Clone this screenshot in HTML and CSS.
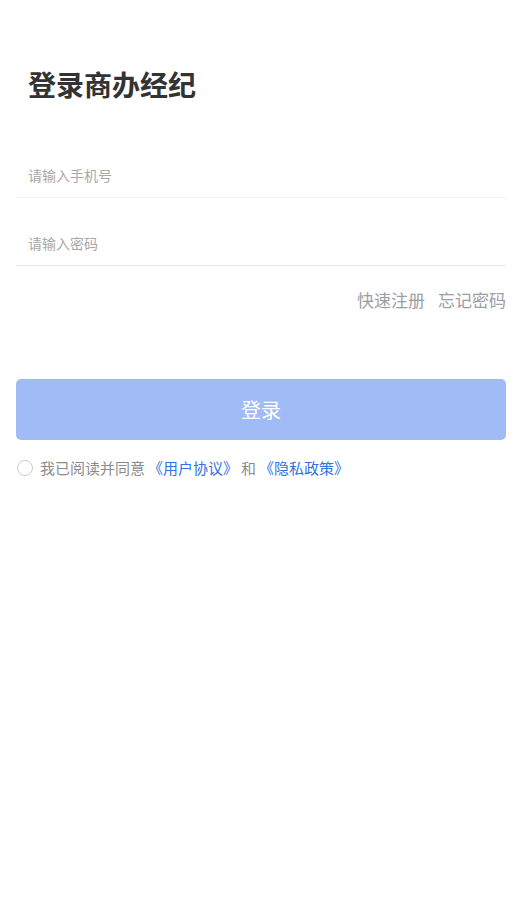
FILE: index.html
```html
<!DOCTYPE html>
<html lang="zh-CN">
<head>
    <meta charset="UTF-8">
    <meta name="viewport" content="width=device-width, initial-scale=1.0">
    <title>登录商办经纪</title>
    <link rel="stylesheet" href="styles.css">
</head>
<body>
    <div class="page">
        <div class="title">登录商办经纪</div>
        <form id="login-form">
            <div class="field field-first">
                <input id="phone" name="phone" type="tel" placeholder="请输入手机号">
            </div>
            <div class="field">
                <input id="password" name="password" type="password" placeholder="请输入密码">
            </div>
            <div class="links">
                <a href="#" class="link-grey">快速注册</a>
                <a href="#" class="link-grey">忘记密码</a>
            </div>
            <button type="submit" class="btn">登录</button>
            <div class="agree">
                <span class="radio"></span>
                <span class="agree-text">我已阅读并同意<a href="#" class="link-blue">《用户协议》</a>和<a href="#" class="link-blue">《隐私政策》</a></span>
            </div>
        </form>
    </div>
</body>
</html>
```

FILE: styles.css
```css
* {
    box-sizing: border-box;
}
body {
    font-family: "Noto Sans CJK SC", "Noto Sans", sans-serif;
    background-color: #ffffff;
    margin: 0;
    padding: 0;
}
.page {
    padding: 0 18px 0 16px;
}
.title {
    margin-top: 64px;
    padding-left: 12px;
    font-size: 28px;
    line-height: 40px;
    font-weight: bold;
    color: #333333;
}
.field {
    padding: 35px 12px 12px;
    border-bottom: 1px solid #e6e6e6;
}
.field-first {
    margin-top: 26px;
    padding-top: 35px;
    border-bottom-color: #f2f2f2;
}
.field input {
    display: block;
    width: 100%;
    height: 20px;
    padding: 0;
    border: none;
    outline: none;
    font-family: inherit;
    font-size: 14px;
    line-height: 20px;
    color: #333333;
}
.field input::placeholder {
    color: #a8a8a8;
}
.links {
    margin-top: 22px;
    display: flex;
    justify-content: flex-end;
    gap: 13px;
    font-size: 17px;
    line-height: 24px;
}
.link-grey {
    color: #9a9ea6;
    text-decoration: none;
}
.btn {
    display: block;
    width: 100%;
    height: 61px;
    margin-top: 67px;
    border: none;
    border-radius: 5px;
    background-color: #a0bbf6;
    color: #ffffff;
    font-family: inherit;
    font-size: 20px;
    cursor: pointer;
}
.agree {
    margin-top: 18px;
    display: flex;
    align-items: center;
    font-size: 15px;
    line-height: 20px;
    color: #8c8c8c;
}
.radio {
    width: 16px;
    height: 16px;
    margin-left: 1px;
    margin-right: 7px;
    border: 1px solid #cccccc;
    border-radius: 50%;
}
.link-blue {
    margin: 0 3px;
    color: #3470e2;
    text-decoration: none;
}
```
